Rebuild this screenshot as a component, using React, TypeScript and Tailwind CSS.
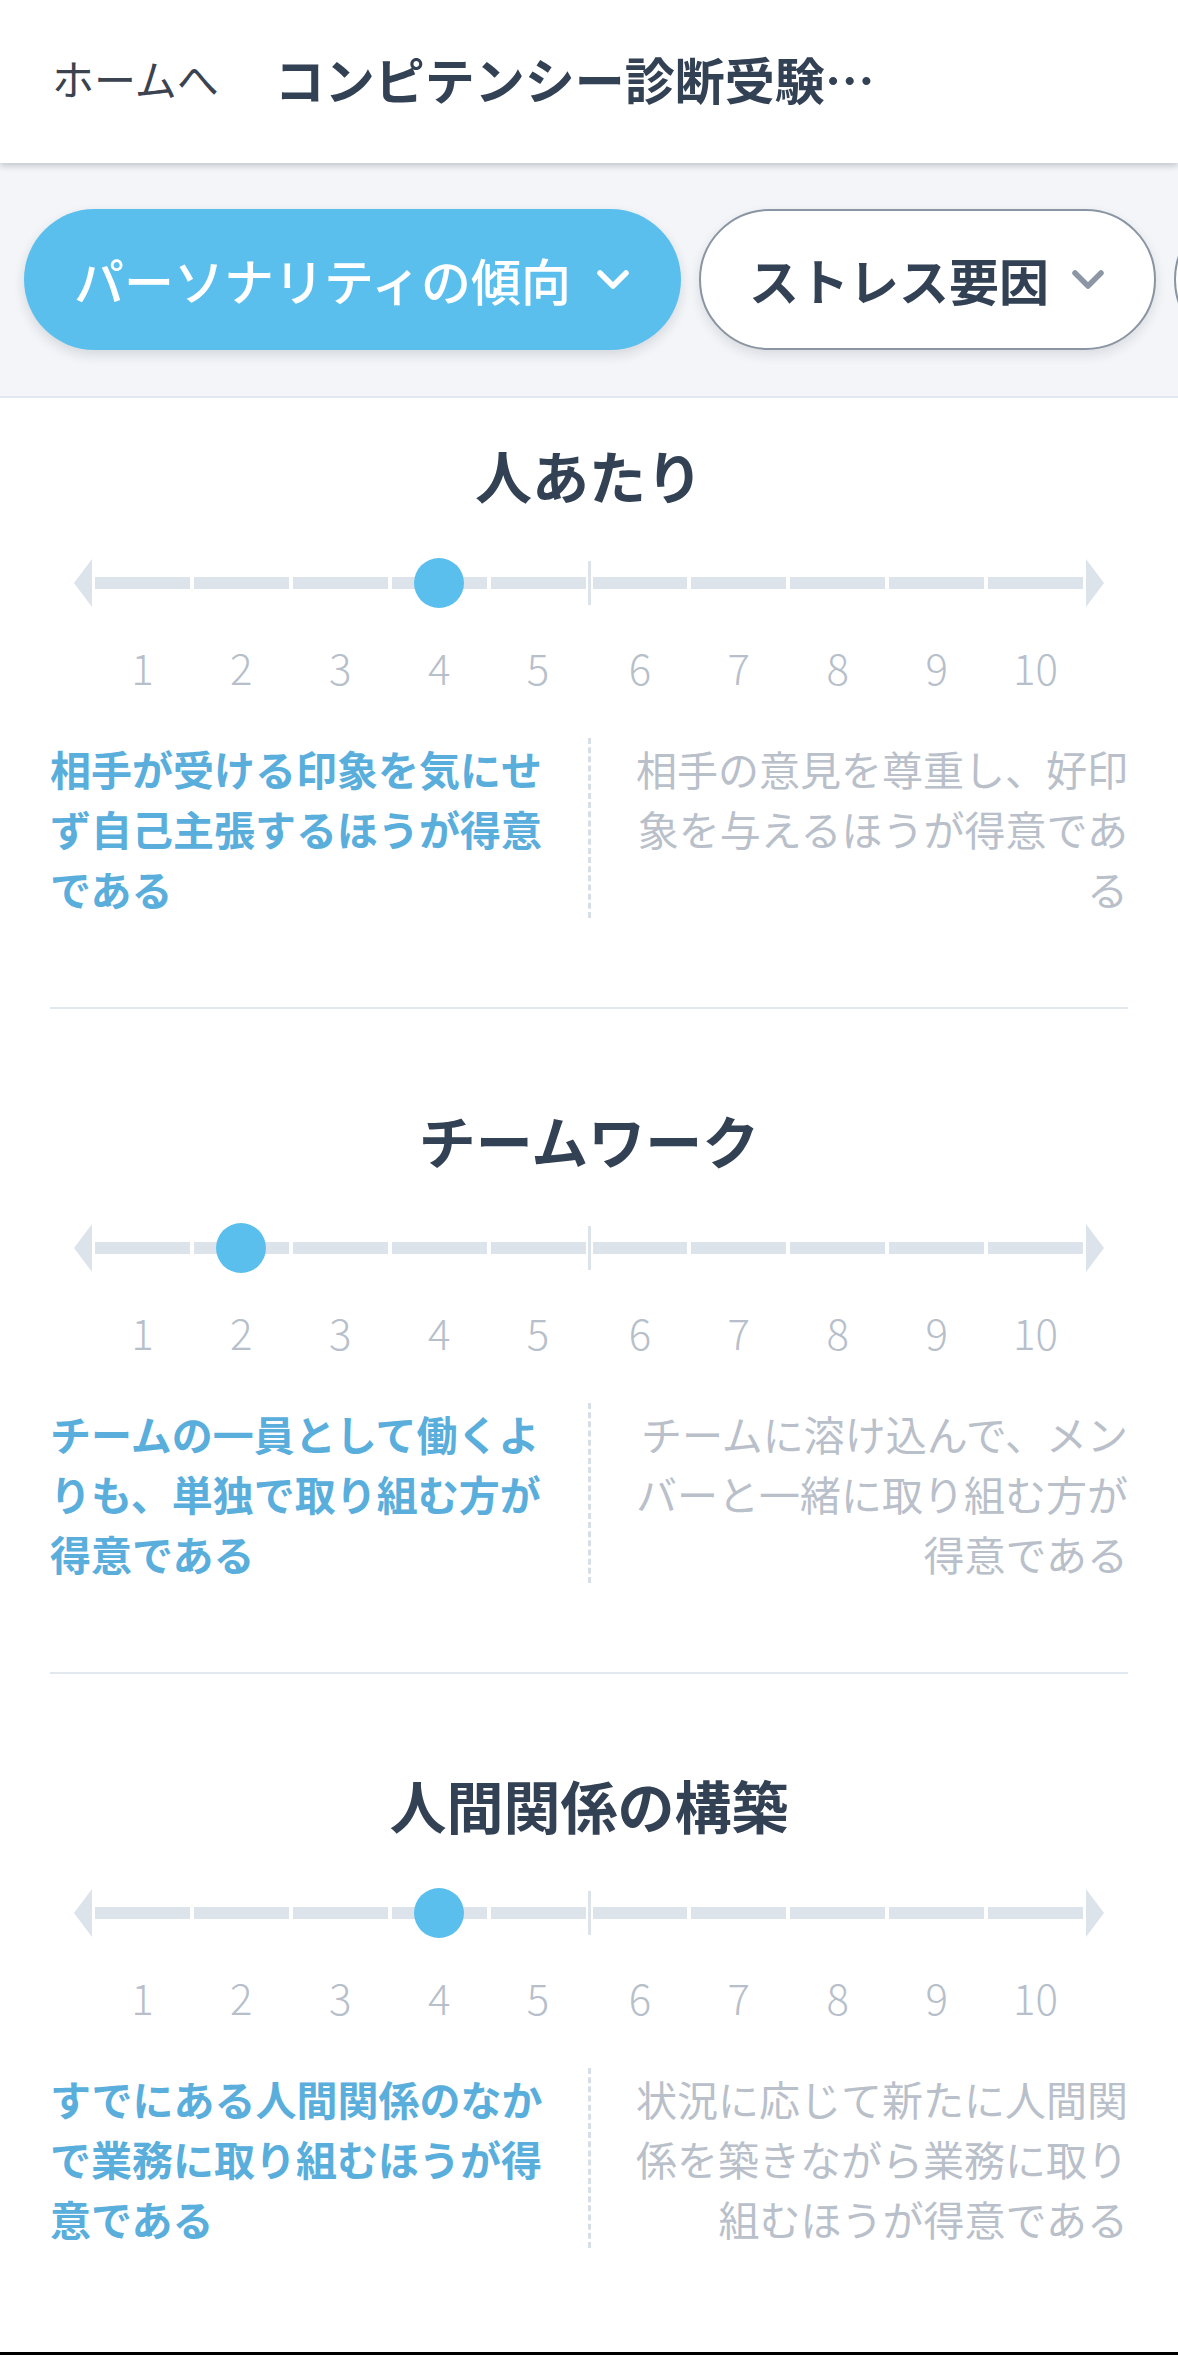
import React from "react";

type Trait = {
  title: string;
  value: number;
  left: string[];
  right: string[];
};

const traits: Trait[] = [
  {
    title: "人あたり",
    value: 4,
    left: ["相手が受ける印象を気にせ", "ず自己主張するほうが得意", "である"],
    right: ["相手の意見を尊重し、好印", "象を与えるほうが得意であ", "る"],
  },
  {
    title: "チームワーク",
    value: 2,
    left: ["チームの一員として働くよ", "りも、単独で取り組む方が", "得意である"],
    right: ["チームに溶け込んで、メン", "バーと一緒に取り組む方が", "得意である"],
  },
  {
    title: "人間関係の構築",
    value: 4,
    left: ["すでにある人間関係のなか", "で業務に取り組むほうが得", "意である"],
    right: ["状況に応じて新たに人間関", "係を築きながら業務に取り", "組むほうが得意である"],
  },
];

function Chevron({ color }: { color: string }) {
  return (
    <svg width="36" height="24" viewBox="0 0 36 24" fill="none">
      <path d="M5 5 L18 18 L31 5" stroke={color} strokeWidth="5.5" strokeLinecap="round" strokeLinejoin="round" />
    </svg>
  );
}

function Segments({ from, value }: { from: number; value: number }) {
  return (
    <div className="grid flex-1 grid-cols-5 gap-[4px]">
      {[0, 1, 2, 3, 4].map((i) => (
        <div key={i} className="relative h-[12px] bg-[#dde3eb]">
          {from + i === value && (
            <span className="absolute left-1/2 top-1/2 h-[50px] w-[50px] -translate-x-1/2 -translate-y-1/2 rounded-full bg-[#5bbfee]" />
          )}
        </div>
      ))}
    </div>
  );
}

function Numbers({ from }: { from: number }) {
  return (
    <div className="grid flex-1 grid-cols-5 gap-[4px]">
      {[0, 1, 2, 3, 4].map((i) => (
        <span key={i} className="text-center text-[42px] font-light leading-[60px] text-[#b7bfca]">
          {from + i}
        </span>
      ))}
    </div>
  );
}

function TraitSection({ trait, first, last }: { trait: Trait; first: boolean; last: boolean }) {
  return (
    <section className={first ? "pt-[36px]" : "pt-[90px]"}>
      <h2 className="text-center text-[57px] font-bold leading-[80px] text-[#334155]">{trait.title}</h2>

      {/* スライダー */}
      <div className="mx-[74px] mt-[45px] flex h-[48px] items-center">
        <svg width="18" height="48" viewBox="0 0 18 48" className="shrink-0">
          <polygon points="0,24 18,0 18,48" fill="#dde3eb" />
        </svg>
        <div className="ml-[3px] flex flex-1">
          <Segments from={1} value={trait.value} />
        </div>
        <div className="mx-[2px] h-[44px] w-[3px] shrink-0 bg-[#dde3eb]" />
        <div className="mr-[3px] flex flex-1">
          <Segments from={6} value={trait.value} />
        </div>
        <svg width="18" height="48" viewBox="0 0 18 48" className="shrink-0">
          <polygon points="18,24 0,0 0,48" fill="#dde3eb" />
        </svg>
      </div>

      <div className="mx-[74px] mt-[30px] flex">
        <div className="w-[21px] shrink-0" />
        <Numbers from={1} />
        <div className="w-[7px] shrink-0" />
        <Numbers from={6} />
        <div className="w-[21px] shrink-0" />
      </div>

      {/* 説明 */}
      <div className="mx-[50px] mt-[41px] flex text-[41px] leading-[60px]">
        <div className="flex-1 pr-[30px] font-bold text-[#5aaedc]">
          {trait.left.map((l) => (
            <div key={l} className="whitespace-nowrap">{l}</div>
          ))}
        </div>
        <div className="w-0 border-l-[3px] border-dashed border-[#d8dee6]" />
        <div className="flex-1 pl-[30px] text-right text-[#b9c0ca]">
          {trait.right.map((l) => (
            <div key={l} className="whitespace-nowrap">{l}</div>
          ))}
        </div>
      </div>

      {!last && <div className="mx-[50px] mt-[89px] h-[2px] bg-[#e2e8ef]" />}
    </section>
  );
}

export default function App() {
  return (
    <div className="flex h-[2355px] flex-col overflow-hidden bg-white font-['Noto_Sans_CJK_JP','Noto_Sans',sans-serif]">
      {/* ヘッダー */}
      <header className="relative z-10 flex h-[163px] shrink-0 items-center bg-white pb-[8px] pl-[52px] shadow-[0_3px_6px_rgba(30,41,59,0.22)]">
        <span className="text-[42px] leading-none text-[#3b4350]">ホームへ</span>
        <span className="ml-[56px] whitespace-nowrap text-[50px] font-bold leading-[64px] text-[#334155]">
          コンピテンシー診断受験…
        </span>
      </header>

      {/* タブ */}
      <nav className="flex h-[235px] shrink-0 items-center gap-[18px] overflow-hidden border-b-2 border-[#e2e8ef] bg-[#f3f5f8] pl-[24px]">
        <button className="flex h-[141px] shrink-0 items-center gap-[24px] rounded-full bg-[#5bbfee] px-[50px] text-[50px] font-medium text-white shadow-[0_5px_12px_rgba(30,41,59,0.14)]">
          パーソナリティの傾向
          <Chevron color="#ffffff" />
        </button>
        <button className="flex h-[141px] shrink-0 items-center gap-[21px] rounded-full border-2 border-[#8a94a3] bg-white px-[48px] text-[50px] font-bold text-[#334155] shadow-[0_5px_12px_rgba(30,41,59,0.12)]">
          ストレス要因
          <Chevron color="#8c96a5" />
        </button>
        <button
          aria-label="職務適性"
          className="h-[141px] w-[360px] shrink-0 rounded-full border-2 border-[#8a94a3] bg-white"
        />
      </nav>

      <main className="flex-1">
        {traits.map((t, i) => (
          <TraitSection key={t.title} trait={t} first={i === 0} last={i === traits.length - 1} />
        ))}
      </main>
      <div className="h-[3px] shrink-0 bg-black" />
    </div>
  );
}
